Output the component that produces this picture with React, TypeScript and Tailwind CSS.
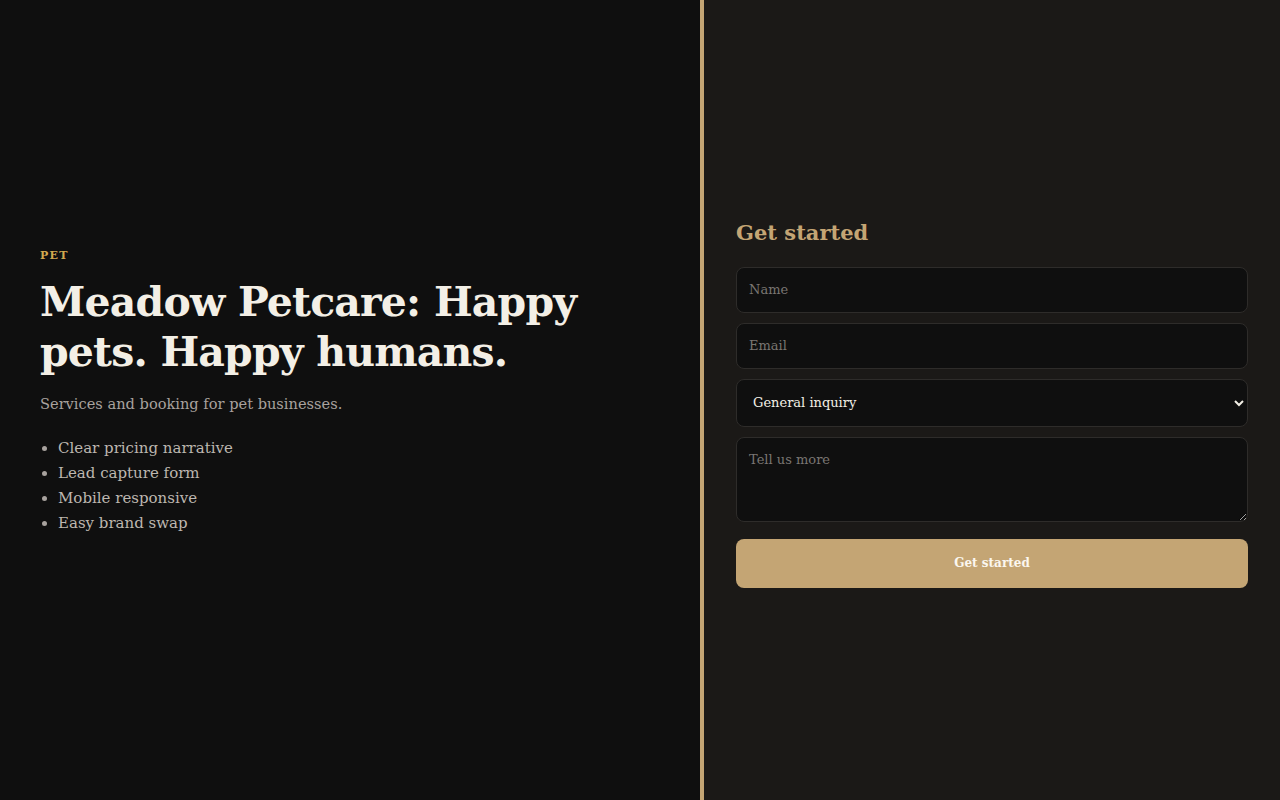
const features = [
  "Clear pricing narrative",
  "Lead capture form",
  "Mobile responsive",
  "Easy brand swap",
];

const serif = "font-['DejaVu_Serif',serif]";

export default function App() {
  return (
    <div className={`flex min-h-[800px] w-full ${serif}`}>
      <section className="flex w-[700px] flex-col justify-center bg-[#0f0f0f] px-10 pb-4">
        <p className="text-[11px] font-bold tracking-[0.12em] text-[#d2a94f] uppercase">
          Pet
        </p>
        <h1 className="mt-3 text-[41px] leading-[50px] font-bold tracking-[-0.02em] text-[#f3efe6]">
          Meadow Petcare: Happy pets. Happy humans.
        </h1>
        <p className="mt-4 text-[14.6px] text-[#a8a29e]">
          Services and booking for pet businesses.
        </p>
        <ul className="mt-[21px] list-disc pl-[18px] text-[15px] leading-[25px] text-[#bdb7b0] marker:text-[#a8a29e]">
          {features.map((f) => (
            <li key={f}>{f}</li>
          ))}
        </ul>
      </section>

      <section className="flex flex-1 flex-col justify-center border-l-4 border-[#c4a574] bg-[#1b1917] px-8 pt-[2px]">
        <h2 className="text-[21px] leading-[36px] font-bold text-[#c4a574]">Get started</h2>
        <form className="mt-4 flex flex-col gap-[10px]" onSubmit={(e) => e.preventDefault()}>
          <input
            placeholder="Name"
            className="h-[46px] rounded-lg border border-[#2e2c2a] bg-[#0f0f0f] px-3 text-[13px] text-[#f3efe6] placeholder:text-[#7a7672] outline-none"
          />
          <input
            placeholder="Email"
            className="h-[46px] rounded-lg border border-[#2e2c2a] bg-[#0f0f0f] px-3 text-[13px] text-[#f3efe6] placeholder:text-[#7a7672] outline-none"
          />
          <select
            defaultValue="general"
            className="h-[48px] rounded-lg border border-[#2e2c2a] bg-[#0f0f0f] px-3 text-[13px] text-[#f3efe6] outline-none"
          >
            <option value="general">General inquiry</option>
            <option value="booking">Booking</option>
            <option value="pricing">Pricing</option>
          </select>
          <textarea
            placeholder="Tell us more"
            className="h-[85px] rounded-lg border border-[#2e2c2a] bg-[#0f0f0f] px-3 py-3 text-[13px] text-[#f3efe6] placeholder:text-[#7a7672] outline-none"
          />
          <button
            type="submit"
            className="mt-[7px] h-[49px] rounded-lg bg-[#c4a574] text-[12px] font-bold text-[#fbf7ef]"
          >
            Get started
          </button>
        </form>
      </section>
    </div>
  );
}
